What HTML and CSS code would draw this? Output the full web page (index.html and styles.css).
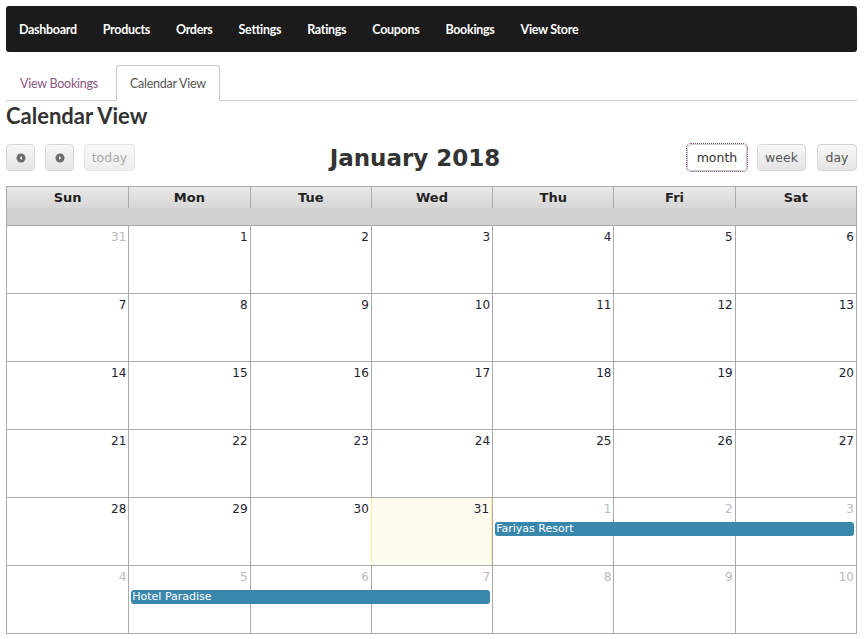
FILE: index.html
```html
<!DOCTYPE html>
<html lang="en">
<head>
    <meta charset="UTF-8">
    <meta name="viewport" content="width=device-width, initial-scale=1.0">
    <title>Calendar View</title>
    <link rel="stylesheet" href="styles.css">
</head>
<body>
    <div id="page">
        <nav id="topnav">
            <a href="#">Dashboard</a>
            <a href="#">Products</a>
            <a href="#">Orders</a>
            <a href="#">Settings</a>
            <a href="#">Ratings</a>
            <a href="#">Coupons</a>
            <a href="#">Bookings</a>
            <a href="#">View Store</a>
        </nav>

        <ul id="tabs">
            <li><a href="#" class="tab-link">View Bookings</a></li>
            <li class="active"><a href="#" class="tab-link">Calendar View</a></li>
        </ul>

        <h2 id="page-title">Calendar View</h2>

        <div id="calendar">
            <div class="toolbar">
                <div class="btn-group">
                    <button class="cal-btn icon-btn">
                        <svg width="10" height="10" viewBox="0 0 10 10"><circle cx="5" cy="5" r="4.5" fill="#6b6b6b"/><path d="M6 3 L3.6 5 L6 7 Z" fill="#fff"/></svg>
                    </button>
                    <button class="cal-btn icon-btn">
                        <svg width="10" height="10" viewBox="0 0 10 10"><circle cx="5" cy="5" r="4.5" fill="#6b6b6b"/><path d="M4 3 L6.4 5 L4 7 Z" fill="#fff"/></svg>
                    </button>
                    <button class="cal-btn disabled">today</button>
                </div>
                <h2 class="cal-title">January 2018</h2>
                <div class="btn-group">
                    <button class="cal-btn active">month</button>
                    <button class="cal-btn week-btn">week</button>
                    <button class="cal-btn day-btn">day</button>
                </div>
            </div>

            <div class="grid">
                <div class="day-head">
                    <div>Sun</div><div>Mon</div><div>Tue</div><div>Wed</div><div>Thu</div><div>Fri</div><div>Sat</div>
                </div>
                <div class="head-band"></div>
                <div id="weeks"></div>
            </div>
        </div>
    </div>

    <script>
        // first cell is Sun Dec 31 2017
        const events = [
            { title: "Fariyas Resort", week: 4, from: 4, to: 6 },
            { title: "Hotel Paradise", week: 5, from: 1, to: 3 }
        ];

        const weeksEl = document.getElementById("weeks");
        let day = 31;
        let month = -1;

        for (let w = 0; w < 6; w++) {
            const week = document.createElement("div");
            week.className = "week";

            for (let d = 0; d < 7; d++) {
                const cell = document.createElement("div");
                cell.className = "day";
                cell.style.gridColumn = (d + 1);
                if (month !== 0) cell.classList.add("other");
                if (month === 0 && day === 31) cell.classList.add("today");
                cell.innerHTML = '<span class="num">' + day + '</span>';
                week.appendChild(cell);

                day++;
                if (month === -1 && day > 31) { day = 1; month = 0; }
                else if (month === 0 && day > 31) { day = 1; month = 1; }
            }

            events.filter(e => e.week === w).forEach(e => {
                const ev = document.createElement("div");
                ev.className = "event";
                ev.textContent = e.title;
                ev.style.gridColumn = (e.from + 1) + " / " + (e.to + 2);
                week.appendChild(ev);
            });

            weeksEl.appendChild(week);
        }
    </script>
</body>
</html>
```

FILE: styles.css
```css
body {
    margin: 0;
    padding: 0;
    background-color: #fff;
    font-family: Lato, "Open Sans", sans-serif;
}

#page {
    width: 851px;
    padding: 6px 0 0 6px;
}

#topnav {
    display: flex;
    align-items: center;
    height: 46px;
    padding-left: 13px;
    gap: 26px;
    background-color: #1b1b1b;
    border-radius: 3px;
}

#topnav a {
    color: #fff;
    text-decoration: none;
    font-size: 12.5px;
    font-weight: bold;
    letter-spacing: -0.3px;
}

#tabs {
    display: flex;
    list-style: none;
    margin: 13px 0 0 0;
    padding: 0;
    border-bottom: 1px solid #ccc;
}

#tabs li {
    margin-bottom: -1px;
}

.tab-link {
    display: block;
    height: 36px;
    line-height: 36px;
    padding: 0 13px;
    font-size: 12.5px;
    letter-spacing: -0.25px;
    color: #8a5484;
    text-decoration: none;
    border: 1px solid transparent;
    border-radius: 3px 3px 0 0;
    box-sizing: border-box;
}

#tabs li.active .tab-link {
    color: #555;
    border-color: #ccc;
    border-bottom-color: #fff;
    background-color: #fff;
}

#tabs li + li {
    margin-left: 4px;
}

#page-title {
    margin: 2px 0 0 0;
    font-size: 22px;
    line-height: 26px;
    font-weight: bold;
    color: #333;
}

#calendar {
    font-family: "DejaVu Sans", Verdana, sans-serif;
}

.toolbar {
    display: flex;
    align-items: center;
    justify-content: space-between;
    margin-top: 15px;
    height: 27px;
}

.btn-group {
    display: flex;
    gap: 10px;
}

.cal-btn {
    height: 27px;
    padding: 0;
    font-family: "DejaVu Sans", Verdana, sans-serif;
    font-size: 12.5px;
    color: #555;
    background: linear-gradient(#f8f8f8, #e4e4e4);
    border: 1px solid #d6d6d6;
    border-radius: 4px;
    cursor: pointer;
}

.icon-btn {
    width: 29px;
    display: flex;
    align-items: center;
    justify-content: center;
}

.cal-btn.disabled {
    color: #aaa;
    background: linear-gradient(#f9f9f9, #eee);
    border-color: #e4e4e4;
    width: 51px;
}

.cal-btn.active {
    background: #fff;
    color: #333;
    outline: 1px dotted #7a3b6e;
    outline-offset: 0;
    border-color: #ccc;
    width: 60px;
}

.week-btn {
    width: 49px;
}

.day-btn {
    width: 40px;
    margin-left: 1px;
}

.cal-title {
    margin: 0 0 0 8px;
    font-size: 23px;
    font-weight: bold;
    color: #333;
}

.grid {
    margin-top: 15px;
    border: 1px solid #aaa;
    border-bottom: none;
}

.day-head {
    display: grid;
    grid-template-columns: repeat(7, 1fr);
    background: linear-gradient(#e9e9e9, #d6d6d6);
}

.day-head div {
    height: 21px;
    line-height: 21px;
    text-align: center;
    font-size: 13px;
    font-weight: bold;
    color: #222;
}

.day-head div + div {
    border-left: 1px solid #aaa;
}

.head-band {
    height: 17px;
    background-color: #d0d0d0;
}

.week {
    display: grid;
    grid-template-columns: repeat(7, 1fr);
    grid-template-rows: 67px;
    border-top: 1px solid #aaa;
}

.week:last-child {
    border-bottom: 1px solid #aaa;
}

.day {
    grid-row: 1;
    text-align: right;
    padding: 4px 2px 0 0;
    font-size: 12px;
    color: #1e2233;
}

.day + .day {
    border-left: 1px solid #aaa;
}

.day.other {
    color: #bbb;
}

.day.today {
    background-color: #fffbef;
    border-left: 1px solid #fbefa8;
    border-right: 1px solid #fbefa8;
}

.event {
    grid-row: 1;
    align-self: start;
    margin: 24px 2px 0 3px;
    height: 14px;
    line-height: 14px;
    padding-left: 1px;
    font-size: 11px;
    color: #fff;
    background-color: #3a87ad;
    border-radius: 3px;
    z-index: 1;
}
```
